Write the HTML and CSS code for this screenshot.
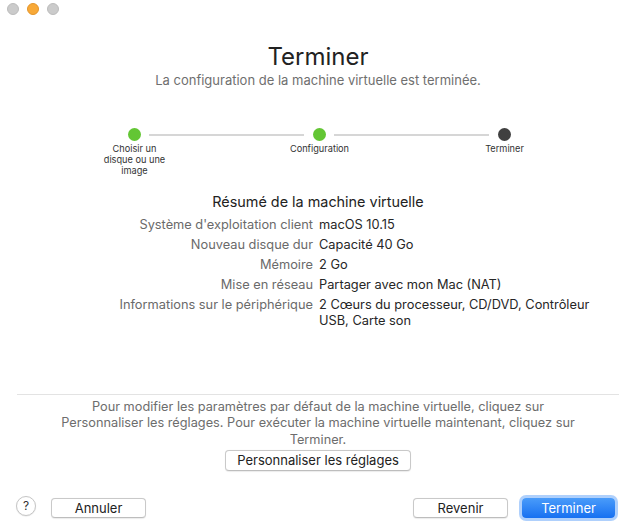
FILE: index.html
```html
<!DOCTYPE html>
<html lang="fr">
<head>
<meta charset="utf-8">
<title>Terminer</title>
<link rel="stylesheet" href="styles.css">
</head>
<body>
<div class="window">
  <div class="titlebar">
    <span class="light light-gray"></span>
    <span class="light light-orange"></span>
    <span class="light light-gray"></span>
  </div>

  <h1 class="title">Terminer</h1>
  <p class="subtitle">La configuration de la machine virtuelle est terminée.</p>

  <div class="stepper">
    <span class="dot dot-done"></span>
    <span class="track"></span>
    <span class="dot dot-done"></span>
    <span class="track"></span>
    <span class="dot dot-current"></span>
    <span class="step-label">Choisir un disque ou une image</span>
    <span class="step-label step-label-2">Configuration</span>
    <span class="step-label step-label-3">Terminer</span>
  </div>

  <h2 class="summary-title">Résumé de la machine virtuelle</h2>
  <dl class="summary">
    <dt>Système d'exploitation client</dt>
    <dd>macOS 10.15</dd>
    <dt>Nouveau disque dur</dt>
    <dd>Capacité 40 Go</dd>
    <dt>Mémoire</dt>
    <dd>2 Go</dd>
    <dt>Mise en réseau</dt>
    <dd>Partager avec mon Mac (NAT)</dd>
    <dt>Informations sur le périphérique</dt>
    <dd>2 Cœurs du processeur, CD/DVD, Contrôleur USB, Carte son</dd>
  </dl>

  <div class="separator"></div>
  <p class="help-text">Pour modifier les paramètres par défaut de la machine virtuelle, cliquez sur Personnaliser les réglages. Pour exécuter la machine virtuelle maintenant, cliquez sur Terminer.</p>
  <div class="custom-row">
    <button class="btn btn-custom">Personnaliser les réglages</button>
  </div>

  <div class="footer">
    <button class="help-btn">?</button>
    <button class="btn btn-footer">Annuler</button>
    <span class="spacer"></span>
    <button class="btn btn-footer">Revenir</button>
    <button class="btn btn-footer btn-primary">Terminer</button>
  </div>
</div>
</body>
</html>
```

FILE: styles.css
```css
* {
  box-sizing: border-box;
}

html, body {
  margin: 0;
  padding: 0;
  background: #ffffff;
}

body {
  font-family: Inter, "Liberation Sans", Arial, sans-serif;
  color: #222222;
}

.window {
  width: 636px;
  height: 529px;
  display: flex;
  flex-direction: column;
}

.titlebar {
  height: 20px;
  display: flex;
  gap: 8px;
  padding: 3px 0 0 7px;
}

.light {
  width: 12px;
  height: 12px;
  border-radius: 50%;
}

.light-gray {
  background: #cbcbcb;
  border: 1px solid #bcbcbc;
}

.light-orange {
  background: #f8a938;
  border: 1px solid #e3952b;
}

.title {
  margin: 25px 0 0;
  font-size: 24px;
  font-weight: 400;
  line-height: 24px;
  text-align: center;
  color: #222222;
}

.subtitle {
  margin: 3px 0 0;
  font-size: 13px;
  line-height: 16px;
  text-align: center;
  color: #6f6f6f;
}

.stepper {
  margin: 40px 0 0 128px;
  width: 383px;
  display: grid;
  grid-template-columns: 13px 1fr 13px 1fr 13px;
  grid-template-rows: 13px auto;
  row-gap: 2px;
}

.dot {
  width: 13px;
  height: 13px;
  border-radius: 50%;
}

.dot-done {
  background: #63c634;
}

.dot-current {
  background: #404040;
}

.track {
  align-self: center;
  height: 2px;
  margin: 0 9px 0 8px;
  background: #d6d6d6;
}

.step-label {
  grid-row: 2;
  grid-column: 1;
  width: 70px;
  margin-left: -28.5px;
  font-size: 9.2px;
  line-height: 11px;
  text-align: center;
  color: #333333;
}

.step-label-2 {
  grid-column: 3;
}

.step-label-3 {
  grid-column: 5;
}

.summary-title {
  margin: 16px 0 0;
  font-size: 14.4px;
  font-weight: 400;
  line-height: 20px;
  text-align: center;
  color: #222222;
}

.summary {
  margin: 5px 0 0 17px;
  display: grid;
  grid-template-columns: 296px 280px;
  column-gap: 6px;
  row-gap: 4px;
  font-size: 12.8px;
  line-height: 16px;
}

.summary dt {
  margin: 0;
  text-align: right;
  color: #6a6a6a;
}

.summary dd {
  margin: 0;
  color: #262626;
}

.separator {
  margin: 65px 17px 0 17px;
  height: 1px;
  background: #e3e3e3;
}

.help-text {
  margin: 4px auto 0;
  width: 516px;
  font-size: 12.75px;
  line-height: 16.3px;
  text-align: center;
  color: #6d6d6d;
}

.custom-row {
  display: flex;
  justify-content: center;
  margin-top: 2px;
}

.btn {
  font-family: Inter, "Liberation Sans", Arial, sans-serif;
  font-size: 13px;
  color: #222222;
  background: #ffffff;
  border: 1px solid #c9c9c9;
  border-bottom-color: #bdbdbd;
  border-radius: 4px;
  box-shadow: 0 0.5px 1px rgba(0, 0, 0, 0.08);
  padding: 0;
  line-height: 18px;
  text-align: center;
}

.btn-custom {
  width: 186px;
  height: 21px;
}

.footer {
  margin-top: auto;
  margin-bottom: 11px;
  display: flex;
  align-items: flex-start;
  padding: 0 21px 0 16px;
}

.help-btn {
  width: 20px;
  height: 20px;
  margin-top: -2px;
  border-radius: 50%;
  border: 1px solid #c6c6c6;
  background: #ffffff;
  box-shadow: 0 0.5px 1px rgba(0, 0, 0, 0.1);
  padding: 0;
  font-family: Inter, "Liberation Sans", Arial, sans-serif;
  font-size: 12px;
  line-height: 18px;
  color: #333333;
}

.btn-footer {
  width: 95px;
  height: 20px;
}

.help-btn + .btn-footer {
  margin-left: 15px;
}

.spacer {
  flex: 1;
}

.btn-primary {
  margin-left: 14px;
  width: 93px;
  color: #ffffff;
  border: none;
  background: linear-gradient(#4a9cfa, #1770f1);
  box-shadow: 0 0 0 3px rgba(110, 170, 250, 0.55);
}
```
